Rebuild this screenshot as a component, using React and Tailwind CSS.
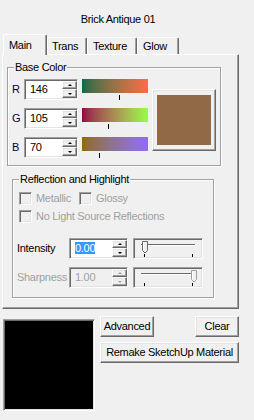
import React from 'react';

const sunken =
  'border border-t-[#a0a0a0] border-l-[#a0a0a0] border-r-white border-b-white shadow-[inset_1px_1px_0_#696969,inset_-1px_-1px_0_#e3e3e3]';
const raised =
  'border border-t-white border-l-white border-r-[#696969] border-b-[#696969] shadow-[inset_-1px_-1px_0_#a0a0a0,inset_1px_1px_0_#e3e3e3]';

const Spin = ({ disabled }) => {
  const arrow = disabled ? 'border-[#a0a0a0]' : 'border-black';
  return (
    <div className="flex flex-col w-[15px] h-[17px] my-[1px] shrink-0">
      <div className={`${raised} h-[8px] flex items-center justify-center bg-[#f0f0f0]`}>
        <span className={`w-0 h-0 border-x-[2px] border-x-transparent border-b-[2px] ${disabled ? 'border-b-[#a0a0a0]' : 'border-b-black'} border-t-0`} />
      </div>
      <div className={`${raised} h-[9px] flex items-center justify-center bg-[#f0f0f0]`}>
        <span className={`w-0 h-0 border-x-[2px] border-x-transparent border-t-[2px] ${disabled ? 'border-t-[#a0a0a0]' : 'border-t-black'} border-b-0`} />
      </div>
    </div>
  );
};

const Edit = ({ value, className, selected, disabled }) => (
  <div className={`${sunken} ${className} h-[21px] flex items-center ${disabled ? 'bg-[#f0f0f0]' : 'bg-white'}`}>
    <div className="flex-1 pl-[5px] leading-[13px]">
      <span className={selected ? 'bg-[#3399ff] text-white' : disabled ? 'text-[#a0a0a0]' : 'text-black'}>{value}</span>
    </div>
    <Spin disabled={disabled} />
  </div>
);

const ColorRow = ({ label, value, from, to }) => (
  <div className="flex h-[21px]">
    <span className="w-[12px] leading-[21px] text-[#000040]">{label}</span>
    <Edit value={value} className="w-[54px]" />
    <div className="ml-[4px] w-[66px] flex flex-col">
      <div className={`h-[17px] bg-gradient-to-r ${from} ${to}`} />
      <div className="mt-[2px] w-[1px] h-[6px] bg-black" style={{ marginLeft: Math.floor((value / 255) * 65) }} />
    </div>
  </div>
);

const Check = ({ label, className = '' }) => (
  <div className={`flex items-center ${className}`}>
    <div className={`${sunken} w-[13px] h-[13px] bg-[#f0f0f0] shrink-0`} />
    <span className="ml-[4px] leading-[13px] text-[#a0a0a0]">{label}</span>
  </div>
);

const Slider = ({ pos, disabled }) => {
  const x = pos === 'left' ? 7 : 56;
  return (
    <div className={`${sunken} w-[70px] h-[21px] ml-[5px] p-[1px]`}>
      <svg width="66" height="17" viewBox="0 0 66 17" className="block">
        <line x1="6" y1="4.5" x2="60" y2="4.5" stroke="#696969" />
        <line x1="6" y1="5.5" x2="60" y2="5.5" stroke="#ffffff" />
        <path d={`M${x + 0.5} 1.5 H${x + 5.5} V10.5 L${x + 3} 13 L${x + 0.5} 10.5 Z`} fill="#f0f0f0" stroke={disabled ? '#a0a0a0' : '#696969'} />
        <line x1={x + 1.5} y1="2.5" x2={x + 1.5} y2="10" stroke="#ffffff" />
        <line x1="9.5" y1="14" x2="9.5" y2="17" stroke="#000" />
        <line x1="57.5" y1="14" x2="57.5" y2="17" stroke="#000" />
      </svg>
    </div>
  );
};

const Tab = ({ label, active, className }) => (
  <div
    className={`border-l border-t border-r border-l-white border-t-white border-r-[#696969] shadow-[inset_-1px_0_0_#a0a0a0] rounded-tl-[2px] rounded-tr-[2px] bg-[#f0f0f0] leading-[13px] ${
      active ? 'h-[21px] pt-[4px] relative z-10' : 'h-[17px] mb-[1px] pt-[2px]'
    } ${className}`}
  >
    {label}
  </div>
);

export default function App() {
  return (
    <div className="w-[254px] h-[420px] bg-[#f0f0f0] overflow-hidden font-['Liberation_Sans',Arial,sans-serif] text-[11px] tracking-[-0.3px] text-black">
      <div className="w-[236px] mt-[13px] h-[13px] leading-[13px] text-center">Brick Antique 01</div>

      <div className="flex items-end ml-[3px] mt-[8px] h-[21px] -mb-[1px]">
        <Tab label="Main" active className="w-[44px] pl-[5px]" />
        <Tab label="Trans" className="w-[40px] pl-[4px]" />
        <Tab label="Texture" className="w-[50px] pl-[5px]" />
        <Tab label="Glow" className="w-[42px] pl-[5px]" />
      </div>

      <div className="ml-[2px] w-[237px] h-[255px] border border-t-white border-l-white border-r-[#696969] border-b-[#696969] shadow-[inset_-1px_-1px_0_#a0a0a0] flex flex-col">
        <div className="relative ml-[4px] mt-[12px] w-[214px] h-[99px] border border-[#a0a0a0] shadow-[inset_1px_1px_0_white,1px_1px_0_white]">
          <span className="absolute -top-[7px] left-[6px] px-[1px] bg-[#f0f0f0] leading-[13px]">Base Color</span>
          <div className="flex pt-[11px] pl-[4px]">
            <div className="flex flex-col gap-[8px]">
              <ColorRow label="R" value={146} from="from-[rgb(0,105,70)]" to="to-[rgb(255,105,70)]" />
              <ColorRow label="G" value={105} from="from-[rgb(146,0,70)]" to="to-[rgb(146,255,70)]" />
              <ColorRow label="B" value={70} from="from-[rgb(146,105,0)]" to="to-[rgb(146,105,255)]" />
            </div>
            <div className={`${raised} ml-[4px] mt-[10px] w-[64px] h-[62px] pt-[5px] pb-[5px] px-[4px]`}>
              <div className="w-full h-full bg-[#926946]" />
            </div>
          </div>
        </div>

        <div className="relative ml-[9px] mt-[13px] w-[202px] h-[119px] border border-[#a0a0a0] shadow-[inset_1px_1px_0_white,1px_1px_0_white]">
          <span className="absolute -top-[7px] left-[6px] px-[1px] bg-[#f0f0f0] leading-[13px]">Reflection and Highlight</span>
          <div className="flex flex-col pt-[12px] pl-[6px]">
            <div className="flex">
              <Check label="Metallic" className="w-[60px]" />
              <Check label="Glossy" />
            </div>
            <Check label="No Light Source Reflections" className="mt-[5px]" />
          </div>
          <div className="flex mt-[15px] pl-[4px] items-center">
            <span className="w-[52px] leading-[13px]">Intensity</span>
            <Edit value="0.00" selected className="w-[59px]" />
            <Slider pos="left" />
          </div>
          <div className="flex mt-[8px] pl-[4px] items-center">
            <span className="w-[52px] leading-[13px] text-[#a0a0a0]">Sharpness</span>
            <Edit value="1.00" disabled className="w-[59px]" />
            <Slider pos="right" disabled />
          </div>
        </div>
      </div>

      <div className="flex ml-[3px] mt-[7px]">
        <div className={`${sunken} mt-[3px] w-[92px] h-[92px] bg-black`} />
        <div className="ml-[5px] w-[139px] flex flex-col">
          <div className="flex justify-between">
            <button className={`${raised} w-[54px] h-[21px] bg-[#f0f0f0] leading-[13px]`}>Advanced</button>
            <button className={`${raised} w-[44px] h-[21px] bg-[#f0f0f0] leading-[13px]`}>Clear</button>
          </div>
          <button className={`${raised} mt-[5px] w-[139px] h-[21px] bg-[#f0f0f0] leading-[13px]`}>Remake SketchUp Material</button>
        </div>
      </div>
    </div>
  );
}
